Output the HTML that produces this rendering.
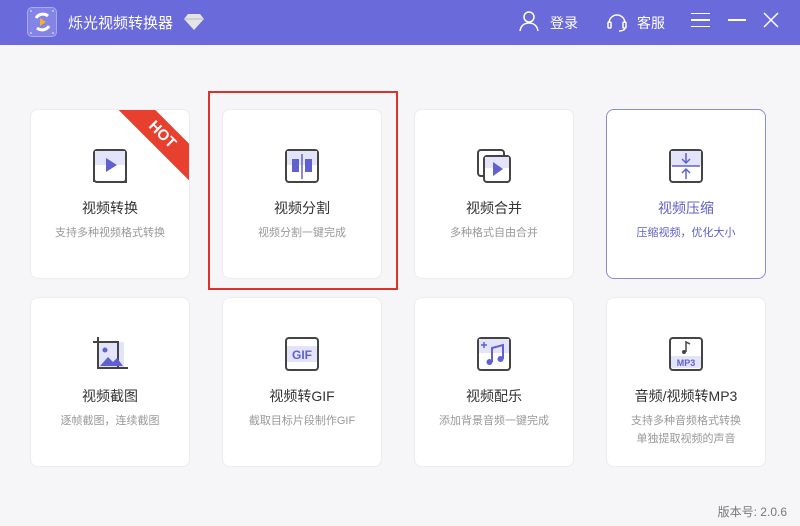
<!DOCTYPE html>
<html><head><meta charset="utf-8"><style>
*{margin:0;padding:0;box-sizing:border-box}
body{width:800px;height:526px;background:#f6f6f9;font-family:"Liberation Sans","Noto Sans CJK SC",sans-serif;position:relative;overflow:hidden}
.hd{position:absolute;left:0;top:0;width:800px;height:45px;background:#6a6adb;color:#fff}
.card{position:absolute;width:160px;height:170px;background:#fff;border:1px solid #ececf0;border-radius:8px;text-align:center;overflow:hidden}
.card svg{position:absolute;left:61px;top:38px}
.t{position:absolute;left:0;right:0;top:88px;font-size:14px;color:#333}
.s{position:absolute;left:0;right:0;top:114px;font-size:11px;color:#999;line-height:18px}
.sel{border:1px solid #8c8cd6}
.sel .t,.sel .s{color:#6060c8}
</style></head><body>
<div class="hd">
 <div style="position:absolute;left:27px;top:7px;width:30px;height:30px;border-radius:5px;background:#8484e6;border:1px solid #a9a9f0"></div>
 <svg style="position:absolute;left:27px;top:7px" width="30" height="30"><path d="M9 11a8 8 0 0 1 12-2M22 19a8 8 0 0 1-12 2" stroke="#fff" stroke-width="3" fill="none"/><path d="M13 11l6 4-6 4z" fill="#f3b02c"/><circle cx="4" cy="4" r="1" fill="#c8c8f6"/><circle cx="26" cy="4" r="1" fill="#c8c8f6"/><circle cx="4" cy="26" r="1" fill="#c8c8f6"/><circle cx="26" cy="26" r="1" fill="#c8c8f6"/></svg>
 <div style="position:absolute;left:68px;top:12px;font-size:15px">烁光视频转换器</div>
 <svg style="position:absolute;left:184px;top:13px" width="20" height="18"><path d="M4 1h12l4 5-10 11L0 6z" fill="#e4e4e4"/><path d="M1 6h18" stroke="#bbb" stroke-width="1"/></svg>
 <svg style="position:absolute;left:519px;top:10px" width="20" height="22" fill="none" stroke="#fff" stroke-width="1.5"><circle cx="10" cy="7" r="5"/><path d="M1 21c1-6 5-8 9-8s8 2 9 8"/></svg>
 <div style="position:absolute;left:550px;top:13px;font-size:14px">登录</div>
 <svg style="position:absolute;left:606px;top:10px" width="22" height="22" fill="none" stroke="#fff" stroke-width="1.5"><path d="M3 13a8 8 0 0116 0"/><rect x="2" y="12" width="3" height="6" rx="1"/><rect x="17" y="12" width="3" height="6" rx="1"/><path d="M19 18c0 2-3 3-6 3"/></svg>
 <div style="position:absolute;left:637px;top:13px;font-size:14px">客服</div>
 <div style="position:absolute;left:691px;top:13px;width:19px;height:14px;border-top:1.5px solid #fff;border-bottom:1.5px solid #fff"></div>
 <div style="position:absolute;left:691px;top:19px;width:19px;height:1.5px;background:#fff"></div>
 <div style="position:absolute;left:728px;top:19px;width:18px;height:1.5px;background:#fff"></div>
 <svg style="position:absolute;left:762px;top:11px" width="18" height="18" stroke="#fff" stroke-width="1.5"><path d="M2 2l14 14M16 2L2 16"/></svg>
</div>

<div class="card" style="left:30px;top:109px">
 <div style="position:absolute;right:-28px;top:12px;width:110px;height:26px;background:#e8402f;transform:rotate(45deg);color:#fff;font-weight:bold;font-size:15px;line-height:26px;text-align:center">HOT</div>
 <svg width="36" height="36"><rect x="2" y="2" width="32" height="32" rx="3" fill="#fff" stroke="#444" stroke-width="2"/><rect x="3" y="3" width="30" height="14" fill="#e3e3fa"/><path d="M2 34V20M34 20v14H12" stroke="#444" stroke-width="2" fill="none"/><path d="M14 10l11 7-11 7z" fill="#6060d0"/></svg>
 <div class="t">视频转换</div><div class="s">支持多种视频格式转换</div>
</div>
<div class="card" style="left:222px;top:109px">
 <svg width="36" height="36"><rect x="2" y="2" width="32" height="32" rx="3" fill="#fff" stroke="#444" stroke-width="2"/><rect x="3" y="3" width="30" height="14" fill="#e3e3fa"/><rect x="8" y="11" width="7" height="13" fill="#6060d0"/><rect x="21" y="11" width="7" height="13" fill="#6060d0"/><path d="M18 6v25" stroke="#6060d0" stroke-width="1.5"/></svg>
 <div class="t">视频分割</div><div class="s">视频分割一键完成</div>
</div>
<div class="card" style="left:414px;top:109px">
 <svg width="36" height="36"><rect x="2" y="2" width="26" height="26" rx="3" fill="none" stroke="#444" stroke-width="2"/><rect x="8" y="8" width="26" height="26" rx="3" fill="#fff" stroke="#444" stroke-width="2"/><rect x="9" y="9" width="24" height="11" fill="#e3e3fa"/><path d="M17 14l10 7-10 7z" fill="#6060d0"/></svg>
 <div class="t">视频合并</div><div class="s">多种格式自由合并</div>
</div>
<div class="card sel" style="left:606px;top:109px">
 <svg width="36" height="36"><rect x="2" y="2" width="32" height="32" rx="3" fill="#fff" stroke="#444" stroke-width="2"/><rect x="3" y="3" width="30" height="15" fill="#e3e3fa"/><path d="M4 18h28M18 5v10M14 11l4 4 4-4M18 31V21M14 25l4-4 4 4" stroke="#6060d0" stroke-width="1.5" fill="none"/></svg>
 <div class="t">视频压缩</div><div class="s">压缩视频，优化大小</div>
</div>

<div class="card" style="left:30px;top:297px">
 <svg width="36" height="36"><rect x="6" y="6" width="26" height="26" fill="#e3e3fa"/><path d="M6 1v31h30M1 6h25v26" stroke="#444" stroke-width="2" fill="none"/><circle cx="13" cy="14" r="2.5" fill="#6060d0"/><path d="M8 30l8-9 5 5 4-4 6 8z" fill="#6060d0"/></svg>
 <div class="t">视频截图</div><div class="s">逐帧截图，连续截图</div>
</div>
<div class="card" style="left:222px;top:297px">
 <svg width="36" height="36"><rect x="2" y="2" width="32" height="32" rx="3" fill="#fff" stroke="#444" stroke-width="2"/><rect x="3" y="10" width="30" height="16" fill="#e3e3fa"/><text x="18" y="23" font-size="12" font-weight="bold" fill="#6060d0" text-anchor="middle" font-family="Liberation Sans">GIF</text></svg>
 <div class="t">视频转GIF</div><div class="s">截取目标片段制作GIF</div>
</div>
<div class="card" style="left:414px;top:297px">
 <svg width="36" height="36"><rect x="2" y="2" width="32" height="32" rx="3" fill="#fff" stroke="#444" stroke-width="2"/><rect x="3" y="3" width="30" height="14" fill="#e3e3fa"/><path d="M16 26V12l11-3v14" stroke="#6060d0" stroke-width="2" fill="none"/><circle cx="13.5" cy="26" r="3" fill="#6060d0"/><circle cx="24.5" cy="23" r="3" fill="#6060d0"/><path d="M8 6v6M5 9h6" stroke="#6060d0" stroke-width="1.5"/></svg>
 <div class="t">视频配乐</div><div class="s">添加背景音频一键完成</div>
</div>
<div class="card" style="left:606px;top:297px">
 <svg width="36" height="36"><rect x="2" y="2" width="32" height="32" rx="3" fill="#fff" stroke="#444" stroke-width="2"/><rect x="3" y="20" width="30" height="12" fill="#e3e3fa"/><path d="M18 16V6l4 2" stroke="#444" stroke-width="1.5" fill="none"/><circle cx="16" cy="16" r="2" fill="#444"/><text x="18" y="30" font-size="9" font-weight="bold" fill="#6060d0" text-anchor="middle" font-family="Liberation Sans">MP3</text></svg>
 <div class="t">音频/视频转MP3</div><div class="s">支持多种音频格式转换<br>单独提取视频的声音</div>
</div>

<div style="position:absolute;left:208px;top:91px;width:190px;height:199px;border:2px solid #e0302a"></div>
<div style="position:absolute;right:13px;top:503px;font-size:12px;color:#777">版本号: 2.0.6</div>
</body></html>
